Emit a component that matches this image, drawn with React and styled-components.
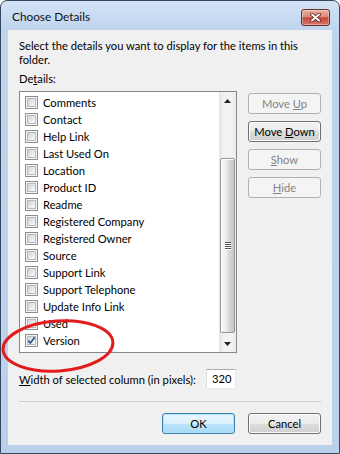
import { styled, createGlobalStyle } from "styled-components";

const details = [
  { name: "Comments" },
  { name: "Contact" },
  { name: "Help Link" },
  { name: "Last Used On" },
  { name: "Location" },
  { name: "Product ID" },
  { name: "Readme" },
  { name: "Registered Company" },
  { name: "Registered Owner" },
  { name: "Source" },
  { name: "Support Link" },
  { name: "Support Telephone" },
  { name: "Update Info Link" },
  { name: "Used" },
  { name: "Version", checked: true },
];

const App = () => {
  return (
    <>
      <GlobalStyle />
      <Window>
        <TitleBar>
          <Title>Choose Details</Title>
          <CloseButton aria-label="Close">
            <svg width="11" height="9" viewBox="0 0 11 9">
              <path d="M2 1.5 L9 7.5 M9 1.5 L2 7.5" stroke="#5a1d16" strokeWidth="3.6" strokeLinecap="round" />
              <path d="M2 1.5 L9 7.5 M9 1.5 L2 7.5" stroke="#ffffff" strokeWidth="2" strokeLinecap="round" />
            </svg>
          </CloseButton>
        </TitleBar>
        <Client>
          <Intro>Select the details you want to display for the items in this folder.</Intro>
          <FieldLabel>
            De<Accel>t</Accel>ails:
          </FieldLabel>
          <MainRow>
            <ListBox>
              <Items>
                {details.map((d) => (
                  <Row key={d.name}>
                    <CheckBox>
                      <CheckInner>
                        {d.checked && (
                          <svg width="9" height="9" viewBox="0 0 9 9">
                            <path d="M1.3 4.6 L3.4 7 L7.8 1.2" fill="none" stroke="#34508e" strokeWidth="1.7" />
                          </svg>
                        )}
                      </CheckInner>
                    </CheckBox>
                    <RowText>{d.name}</RowText>
                  </Row>
                ))}
              </Items>
              <ScrollBar>
                <ArrowButton>
                  <svg width="7" height="4" viewBox="0 0 7 4">
                    <path d="M0 4 L3.5 0 L7 4 Z" fill="#222" />
                  </svg>
                </ArrowButton>
                <Track>
                  <Thumb>
                    <Grip>
                      <span />
                      <span />
                      <span />
                      <span />
                    </Grip>
                  </Thumb>
                </Track>
                <ArrowButton>
                  <svg width="7" height="4" viewBox="0 0 7 4">
                    <path d="M0 0 L7 0 L3.5 4 Z" fill="#222" />
                  </svg>
                </ArrowButton>
              </ScrollBar>
            </ListBox>
            <SideButtons>
              <Button disabled>
                Move <Accel>U</Accel>p
              </Button>
              <Button>
                Move <Accel>D</Accel>own
              </Button>
              <Button disabled>
                <Accel>S</Accel>how
              </Button>
              <Button disabled>
                <Accel>H</Accel>ide
              </Button>
            </SideButtons>
          </MainRow>
          <WidthRow>
            <span>
              <Accel>W</Accel>idth of selected column (in pixels):
            </span>
            <NumberBox>320</NumberBox>
          </WidthRow>
          <Separator />
          <Footer>
            <Button $default>OK</Button>
            <Button>Cancel</Button>
          </Footer>
        </Client>
        <Annotation viewBox="0 0 340 454">
          <ellipse cx="58" cy="346" rx="55" ry="25" transform="rotate(-4 58 346)" fill="none" stroke="#e21c1c" strokeWidth="3" />
        </Annotation>
      </Window>
    </>
  );
};

const GlobalStyle = createGlobalStyle`
  body {
    margin: 0;
    background: #ffffff;
    font-family: Lato, "Liberation Sans", sans-serif;
    font-size: 11.2px;
    color: #000;
  }
`;

const Window = styled.div`
  position: relative;
  width: 340px;
  height: 454px;
  box-sizing: border-box;
  border: 1px solid #34475c;
  border-radius: 7px 7px 0 0;
  background: linear-gradient(#d3e3f5, #bed5ee 30px, #b9d1ea);
  display: flex;
  flex-direction: column;
  padding: 0 7px 8px 7px;
  overflow: hidden;
`;

const TitleBar = styled.div`
  flex-shrink: 0;
  height: 29px;
  display: flex;
  align-items: flex-start;
  justify-content: space-between;
  padding: 8px 2px 0 4px;
  box-sizing: border-box;
`;

const Title = styled.div`
  line-height: 16px;
  font-size: 11.8px;
  color: #111;
`;

const CloseButton = styled.button`
  width: 29px;
  height: 17px;
  padding: 0;
  border: 1px solid #6b2a22;
  border-radius: 3px;
  background: linear-gradient(#eab0a3, #d98a78 45%, #c4483a 52%, #d3786a);
  box-shadow: inset 0 0 0 1px rgba(255, 255, 255, 0.35);
  display: flex;
  align-items: center;
  justify-content: center;
`;

const Client = styled.div`
  flex: 1;
  min-height: 0;
  background: #f0f0f0;
  padding: 9px 11px 11px 11px;
  display: flex;
  flex-direction: column;
`;

const Intro = styled.p`
  margin: 0;
  line-height: 14px;
`;

const FieldLabel = styled.div`
  margin-top: 5px;
  line-height: 14px;
`;

const Accel = styled.span`
  text-decoration: underline;
`;

const MainRow = styled.div`
  margin-top: 5px;
  display: flex;
  gap: 11px;
`;

const ListBox = styled.div`
  width: 218px;
  height: 262px;
  box-sizing: border-box;
  border: 1px solid #828790;
  background: #fff;
  display: flex;
`;

const Items = styled.div`
  flex: 1;
  padding: 2px 0 0 5px;
`;

const Row = styled.div`
  height: 17px;
  display: flex;
  align-items: center;
  gap: 5px;
`;

const CheckBox = styled.span`
  width: 13px;
  height: 13px;
  box-sizing: border-box;
  border: 1px solid #8e8f8f;
  background: #f4f4f4;
  padding: 1px;
  display: flex;
`;

const CheckInner = styled.span`
  flex: 1;
  border: 1px solid #b6babf;
  background: linear-gradient(135deg, #cdd1d6, #eff0f1 70%, #f7f7f7);
  display: flex;
  align-items: center;
  justify-content: center;
  svg {
    margin: -1px;
  }
`;

const RowText = styled.span`
  line-height: 17px;
  white-space: nowrap;
`;

const ScrollBar = styled.div`
  width: 17px;
  display: flex;
  flex-direction: column;
  background: linear-gradient(90deg, #e4e4e4, #f3f3f3 30%, #f3f3f3 70%, #ebebeb);
`;

const ArrowButton = styled.div`
  height: 17px;
  display: flex;
  align-items: center;
  justify-content: center;
`;

const Track = styled.div`
  flex: 1;
  display: flex;
  flex-direction: column;
  justify-content: flex-end;
  padding-bottom: 2px;
`;

const Thumb = styled.div`
  height: 175px;
  margin: 0 0 0 1px;
  width: 15px;
  box-sizing: border-box;
  border: 1px solid #979797;
  border-radius: 2px;
  background: linear-gradient(90deg, #f6f6f6, #ececec 45%, #dcdcdc 55%, #c6c6c6);
  box-shadow: inset 1px 1px 0 #fff;
  display: flex;
  align-items: center;
  justify-content: center;
`;

const Grip = styled.div`
  display: flex;
  flex-direction: column;
  gap: 1px;
  span {
    display: block;
    width: 6px;
    height: 1px;
    background: #555;
    box-shadow: 0 1px 0 #fff;
  }
`;

const SideButtons = styled.div`
  margin-top: 2px;
  display: flex;
  flex-direction: column;
  gap: 7px;
`;

const Button = styled.button`
  width: 73px;
  height: 21px;
  padding: 0;
  font: inherit;
  color: #000;
  border-radius: 3px;
  border: 1px solid ${(p) => (p.$default ? "#3c7fb1" : "#707070")};
  background: ${(p) =>
    p.$default
      ? "linear-gradient(#eaf6fd, #d9f0fc 50%, #bee6fd 50%, #a7d9f5)"
      : "linear-gradient(#f2f2f2, #ebebeb 50%, #dddddd 50%, #cfcfcf)"};
  box-shadow: inset 0 0 0 1px ${(p) => (p.$default ? "#b3e0f9" : "#fcfcfc")};
  &:disabled {
    color: #838383;
    border-color: #adb2b5;
    background: #f4f4f4;
    box-shadow: none;
  }
`;

const WidthRow = styled.div`
  margin-top: 16px;
  display: grid;
  grid-template-columns: 187px 30px;
  align-items: center;
  white-space: nowrap;
`;

const NumberBox = styled.div`
  height: 20px;
  box-sizing: border-box;
  border: 1px solid #e3e9ef;
  border-top-color: #abadb3;
  border-left-color: #dbdfe6;
  background: #fff;
  padding-left: 5px;
  line-height: 18px;
`;

const Separator = styled.hr`
  margin: 12px 0 0 0;
  border: 0;
  border-top: 1px solid #d0d0d0;
  height: 0;
`;

const Footer = styled.div`
  margin-top: 11px;
  display: flex;
  justify-content: flex-end;
  gap: 13px;
`;

const Annotation = styled.svg`
  position: absolute;
  left: -1px;
  top: -1px;
  width: 340px;
  height: 454px;
  pointer-events: none;
`;

export default App;
